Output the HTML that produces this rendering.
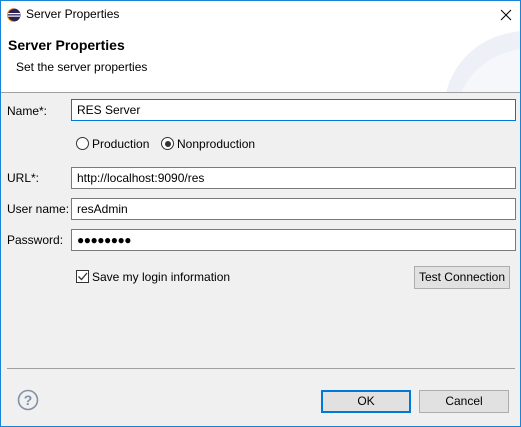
<!DOCTYPE html>
<html><head><style>
*{box-sizing:border-box;margin:0;padding:0}
body{width:521px;height:427px;overflow:hidden;font-family:"Liberation Sans",sans-serif;font-size:12px;color:#000;background:#f0f0f0}
.win{position:absolute;left:0;top:0;width:521px;height:427px;border:1px solid #1883d7;background:#f0f0f0}
.abs{position:absolute}
.title{left:0;top:0;width:519px;height:30px;background:#fff}
.hdr{left:0;top:30px;width:519px;height:62px;background:#fff;border-bottom:1px solid #a0a0a0;overflow:hidden}
.inp{position:absolute;left:70px;width:445px;height:22px;background:#fff;border:1px solid #7a7a7a;padding:3px 5px;font-size:12px}
.lbl{position:absolute;left:6px}
.btn{position:absolute;height:23px;background:#e1e1e1;border:1px solid #adadad;text-align:center;line-height:21px}
</style></head><body><div class="win">
<div class="abs title">
<svg class="abs" style="left:6px;top:7px" width="14" height="14" viewBox="0 0 14 14"><circle cx="7" cy="7" r="6.5" fill="#2c2255"/><rect x="1" y="5" width="12" height="1.2" fill="#fff"/><rect x="1" y="7.5" width="12" height="1.2" fill="#fff"/><path d="M7 .5A6.5 6.5 0 0 0 7 13.5" stroke="#f7941e" stroke-width="1" fill="none"/></svg>
<div class="abs" style="left:25px;top:6px;font-size:12px">Server Properties</div>
<svg class="abs" style="left:499px;top:8px" width="12" height="12"><path d="M1 1L11 11M11 1L1 11" stroke="#000" stroke-width="1"/></svg>
</div>
<div class="abs hdr">
<svg class="abs" style="left:430px;top:0" width="90" height="62"><path d="M90 0 C40 5 20 40 15 62 L90 62Z" fill="#edf1f7"/><path d="M90 18 C60 22 40 40 30 62 L90 62Z" fill="#f5f7fb"/></svg>
<div class="abs" style="left:7px;top:6px;font-size:14px;font-weight:bold">Server Properties</div>
<div class="abs" style="left:15px;top:29px">Set the server properties</div>
</div>
<div class="lbl" style="top:103px">Name*:</div>
<div class="inp" style="top:98px;border-color:#0078d7">RES Server</div>
<div class="abs" style="left:75px;top:136px;width:13px;height:13px;border:1px solid #333;border-radius:50%;background:#fff"></div>
<div class="abs" style="left:91px;top:136px">Production</div>
<div class="abs" style="left:160px;top:136px;width:13px;height:13px;border:1px solid #333;border-radius:50%;background:#fff"><div style="margin:2.5px;width:6px;height:6px;border-radius:50%;background:#333"></div></div>
<div class="abs" style="left:176px;top:136px">Nonproduction</div>
<div class="lbl" style="top:170px">URL*:</div>
<div class="inp" style="top:166px">http://localhost:9090/res</div>
<div class="lbl" style="top:201px">User name:</div>
<div class="inp" style="top:197px">resAdmin</div>
<div class="lbl" style="top:232px">Password:</div>
<div class="inp" style="top:228px;font-size:12px;letter-spacing:-0.5px;line-height:14px">●●●●●●●●</div>
<div class="abs" style="left:75px;top:269px;width:13px;height:13px;border:1px solid #333;background:#fff"><svg width="11" height="11" style="display:block"><path d="M1.5 5.5L4.5 8.5L10 2" stroke="#333" stroke-width="1.3" fill="none"/></svg></div>
<div class="abs" style="left:91px;top:269px">Save my login information</div>
<div class="btn" style="left:413px;top:265px;width:96px">Test Connection</div>
<div class="abs" style="left:6px;top:367px;width:508px;height:1px;background:#a0a0a0"></div>
<svg class="abs" style="left:16px;top:388px" width="22" height="22"><circle cx="11" cy="11" r="9.5" fill="none" stroke="#8090a8" stroke-width="1.6"/><text x="11" y="16" font-size="14" font-weight="bold" text-anchor="middle" fill="#8090a8" font-family="Liberation Sans">?</text></svg>
<div class="btn" style="left:320px;top:389px;width:90px;border:2px solid #0078d7;line-height:19px">OK</div>
<div class="btn" style="left:418px;top:389px;width:90px">Cancel</div>
</div></body></html>
